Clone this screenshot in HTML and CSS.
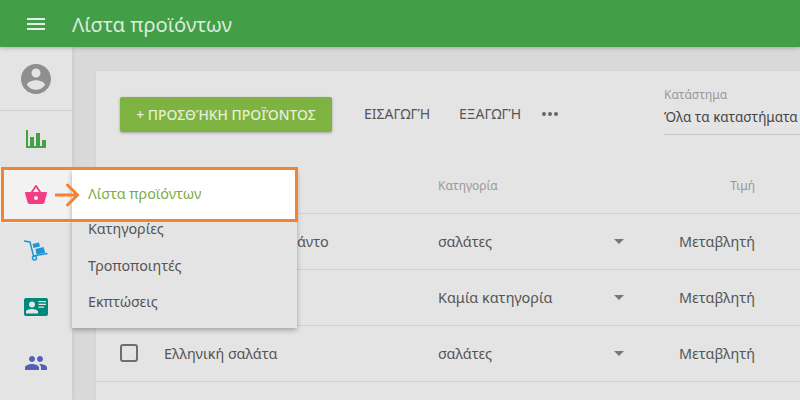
FILE: index.html
```html
<!DOCTYPE html>
<html lang="el">
<head>
<meta charset="utf-8">
<title>Λίστα προϊόντων</title>
<link rel="stylesheet" href="styles.css">
</head>
<body>
<header class="appbar">
  <svg class="burger" width="18" height="12" viewBox="0 0 18 12"><path d="M0 0h18v2H0zM0 5h18v2H0zM0 10h18v2H0z"/></svg>
  <h1 class="title">Λίστα προϊόντων</h1>
</header>
<div class="shell">
  <aside class="rail">
    <div class="avatar">
      <svg width="30" height="30" viewBox="2 2 20 20"><path fill="#8f8f8f" d="M12 2C6.48 2 2 6.48 2 12s4.48 10 10 10 10-4.48 10-10S17.52 2 12 2zm0 3c1.66 0 3 1.34 3 3s-1.34 3-3 3-3-1.34-3-3 1.34-3 3-3zm0 14.2c-2.5 0-4.71-1.28-6-3.22.03-1.99 4-3.08 6-3.08 1.99 0 5.97 1.09 6 3.08-1.29 1.94-3.5 3.22-6 3.22z"/></svg>
    </div>
    <div class="navitem">
      <svg width="24" height="24" viewBox="0 0 24 24"><path fill="#43a047" d="M2 3h2v16h2V10h4v9h2V6h4v13h2v-6h4v8H2z"/></svg>
    </div>
    <div class="navitem active">
      <svg width="24" height="24" viewBox="0 0 24 24"><path fill="#f33d83" d="M17.21 9l-4.38-6.56c-.19-.28-.51-.42-.83-.42-.32 0-.64.14-.83.43L6.79 9H2c-.55 0-1 .45-1 1 0 .09.01.18.04.27l2.54 9.27c.23.84 1 1.46 1.92 1.46h13c.92 0 1.69-.62 1.93-1.46l2.54-9.27L23 10c0-.55-.45-1-1-1h-4.79zM9 9l3-4.4L15 9H9zm3 8c-1.1 0-2-.9-2-2s.9-2 2-2 2 .9 2 2-.9 2-2 2z"/></svg>
    </div>
    <div class="navitem">
      <svg width="24" height="24" viewBox="0 0 24 24"><g fill="none" stroke="#1e96d8" stroke-width="1.500"><path d="M0 2l6 1 3.500 14 14-2.500"/><circle cx="10.500" cy="19" r="2"/></g><path fill="#1e96d8" d="M8.500 5l6.500-1.500 1 4-6.500 1.500zM11.500 10l8-2 1.800 6-8.800 1.600z"/></svg>
    </div>
    <div class="navitem">
      <svg width="24" height="24" viewBox="0 0 24 24"><rect y="3" width="24" height="18" rx="2" fill="#00897b"/><g fill="#e4e4e4"><circle cx="8" cy="9.500" r="3"/><path d="M2 18.500v-2c0-1.500 3.500-2.500 6-2.500s6 1 6 2.500v2zM14.500 6h7.500v1.200h-7.500zM14.500 8.800h7.500V10h-7.500zM14.500 11.600h5.500v1.200h-5.500z"/></g></svg>
    </div>
    <div class="navitem">
      <svg width="24" height="24" viewBox="0 0 24 24"><path fill="#5360b5" d="M16 11c1.660 0 2.990-1.340 2.990-3S17.660 5 16 5c-1.660 0-3 1.340-3 3s1.340 3 3 3zm-8 0c1.660 0 2.990-1.340 2.990-3S9.660 5 8 5C6.340 5 5 6.340 5 8s1.340 3 3 3zm0 2c-2.330 0-7 1.170-7 3.500V19h14v-2.500c0-2.330-4.670-3.500-7-3.500zm8 0c-.29 0-.62.02-.97.05 1.160.84 1.970 1.970 1.970 3.450V19h6v-2.500c0-2.330-4.670-3.500-7-3.500z"/></svg>
    </div>
  </aside>
  <main class="content">
    <section class="card">
      <div class="toolbar">
        <button class="primary">+ ΠΡΟΣΘΉΚΗ ΠΡΟΪΌΝΤΟΣ</button>
        <span class="action first">ΕΙΣΑΓΩΓΉ</span>
        <span class="action second">ΕΞΑΓΩΓΉ</span>
        <span class="dots"><i></i><i></i><i></i></span>
        <div class="store">
          <span class="store-label">Κατάστημα</span>
          <span class="store-value">Όλα τα καταστήματα</span>
        </div>
      </div>
      <div class="row head">
        <span class="check-cell"></span>
        <span class="name"></span>
        <span class="cat">Κατηγορία</span>
        <span class="caret-cell"></span>
        <span class="price">Τιμή</span>
      </div>
      <div class="row">
        <span class="check-cell"><span class="check"></span></span>
        <span class="name">Σαλάτα με ένα αβοκάντο</span>
        <span class="cat">σαλάτες</span>
        <span class="caret-cell"><span class="caret"></span></span>
        <span class="price">Μεταβλητή</span>
      </div>
      <div class="row">
        <span class="check-cell"><span class="check"></span></span>
        <span class="name">Σαλάτα Καίσαρα</span>
        <span class="cat">Καμία κατηγορία</span>
        <span class="caret-cell"><span class="caret"></span></span>
        <span class="price">Μεταβλητή</span>
      </div>
      <div class="row">
        <span class="check-cell"><span class="check"></span></span>
        <span class="name">Ελληνική σαλάτα</span>
        <span class="cat">σαλάτες</span>
        <span class="caret-cell"><span class="caret"></span></span>
        <span class="price">Μεταβλητή</span>
      </div>
    </section>
  </main>
</div>
<nav class="menu">
  <a class="menu-current">Λίστα προϊόντων</a>
  <div class="menu-rest">
    <a>Κατηγορίες</a>
    <a>Τροποποιητές</a>
    <a>Εκπτώσεις</a>
  </div>
</nav>
<div class="callout"></div>
<svg class="arrow" width="25" height="26" viewBox="0 0 25 26"><path fill="none" stroke="#f58233" stroke-width="3" stroke-linecap="round" d="M1 13h21M12.500 3l10 10-10 10"/></svg>
</body>
</html>
```
FILE: styles.css
```css
* { box-sizing: border-box; }
html, body { height: 100%; }
body {
  margin: 0;
  width: 800px;
  height: 400px;
  overflow: hidden;
  position: relative;
  background: #d9d9d9;
  font-family: "Noto Sans", Roboto, sans-serif;
  color: #555;
  display: flex;
  flex-direction: column;
}
.appbar {
  height: 47px;
  flex: none;
  background: #429f48;
  display: flex;
  align-items: center;
  padding-left: 27px;
  position: relative;
  z-index: 3;
  box-shadow: 0 1px 4px rgba(0,0,0,.25);
}
.burger { fill: #e6f0e6; }
.title {
  margin: 0 0 0 27px;
  font-size: 20.200px;
  font-weight: 400;
  color: #dcebdc;
}
.shell { flex: 1; display: flex; min-height: 0; }
.rail {
  width: 72px;
  flex: none;
  background: #e4e4e4;
  box-shadow: 1px 0 4px rgba(0,0,0,.08);
  position: relative;
  z-index: 1;
}
.avatar {
  height: 64px;
  border-bottom: 1px solid #d0d0d0;
  display: flex;
  align-items: center;
  justify-content: center;
}
.navitem {
  height: 56px;
  display: flex;
  align-items: center;
  justify-content: center;
}
.navitem.active { background: #f2f2f2; }
.content { flex: 1; padding: 24px 0 0 24px; min-width: 0; overflow: hidden; }
.card {
  width: 760px;
  height: 400px;
  background: #e4e4e4;
  border-radius: 3px 0 0 0;
  box-shadow: 0 0 2px rgba(0,0,0,.08);
}
.toolbar {
  height: 88px;
  padding: 26px 0 0 24px;
  display: flex;
  align-items: flex-start;
}
.primary {
  width: 212px;
  height: 35px;
  flex: none;
  border: 0;
  border-radius: 2px;
  background: #7fb341;
  color: #e6eedd;
  font: 500 13.900px "Noto Sans", Roboto, sans-serif;
  padding: 0;
  box-shadow: 0 1px 3px rgba(0,0,0,.3);
}
.action {
  font-size: 14px;
  color: #555;
  line-height: 33px;
  flex: none;
}
.first { width: 95px; margin-left: 32px; }
.second { width: 83px; }
.dots { display: flex; gap: 2px; width: 122px; flex: none; padding-top: 15px; }
.dots i { width: 4px; height: 4px; border-radius: 50%; background: #666; }
.store {
  margin-top: -10px;
  width: 136px;
  height: 48px;
  border-bottom: 1px solid #c4c4c4;
  display: flex;
  flex-direction: column;
  flex: none;
}
.store-label { font-size: 12px; line-height: 15px; color: #999; }
.store-value { font-size: 13.500px; line-height: 24px; margin-top: 3px; color: #444; white-space: nowrap; }
.row {
  display: flex;
  align-items: center;
  height: 56px;
  border-bottom: 1px solid #d2d2d2;
  font-size: 14.400px;
  color: #555;
  padding-left: 24px;
  padding-bottom: 1px;
}
.row.head { height: 55px; font-size: 12px; color: #999; }
.check-cell { width: 44px; flex: none; display: flex; }
.check {
  width: 18px;
  height: 18px;
  border: 2px solid #6e6e6e;
  border-radius: 3px;
}
.name { width: 274px; flex: none; white-space: nowrap; }
.cat { width: 176px; flex: none; }
.caret-cell { width: 24px; flex: none; display: flex; }
.caret {
  width: 0;
  height: 0;
  border-left: 5px solid transparent;
  border-right: 5px solid transparent;
  border-top: 5px solid #777;
}
.price { width: 117px; flex: none; text-align: right; }
.menu {
  position: absolute;
  left: 72px;
  top: 170px;
  width: 225px;
  height: 158px;
  background: #e4e4e4;
  box-shadow: 0 2px 5px rgba(0,0,0,.3);
  z-index: 4;
  font-size: 14.300px;
  color: #555;
}
.menu a { display: block; padding-left: 16px; }
.menu-current {
  height: 49px;
  line-height: 47px;
  background: #fff;
  color: #7cab45;
}
.menu-rest { display: flex; flex-direction: column; gap: 14.500px; margin-top: -1px; }
.menu-rest a { line-height: 22px; }
.callout {
  position: absolute;
  left: 1px;
  top: 167px;
  width: 297px;
  height: 55px;
  border: 3px solid #f58233;
  z-index: 5;
}
.arrow {
  position: absolute;
  left: 55px;
  top: 182px;
  z-index: 6;
}
```
